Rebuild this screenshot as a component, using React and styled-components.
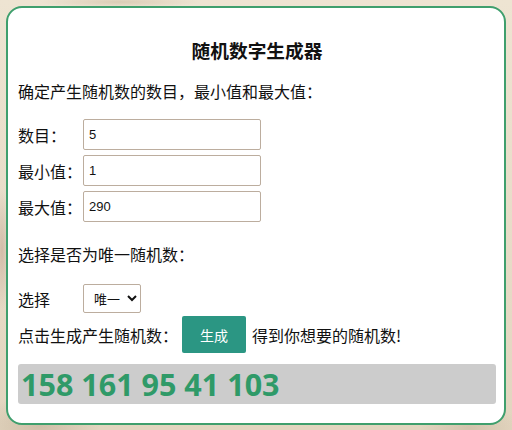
import React, { useState } from 'react';
import styled, { createGlobalStyle } from 'styled-components';

const GlobalStyle = createGlobalStyle`
  html, body {
    margin: 0;
    padding: 0;
  }
  body {
    width: 512px;
    height: 430px;
    overflow: hidden;
    font-family: "Noto Sans CJK SC", "Noto Sans", sans-serif;
    color: #111;
    background-color: #e8ddc9;
    background-image:
      radial-gradient(ellipse 60px 30px at 40px 425px, rgba(150, 120, 95, 0.25), transparent),
      radial-gradient(ellipse 50px 25px at 470px 428px, rgba(150, 120, 95, 0.2), transparent),
      radial-gradient(ellipse 8px 60px at 2px 250px, rgba(170, 130, 110, 0.35), transparent),
      radial-gradient(ellipse 80px 6px at 120px 2px, rgba(190, 170, 140, 0.4), transparent),
      linear-gradient(180deg, #eee4d2, #e2d5bf);
  }
`;

const Card = styled.div`
  box-sizing: border-box;
  margin: 6px;
  width: 500px;
  height: 419px;
  padding: 0 8px 0 10px;
  background: #fff;
  border: 2px solid #3f9f6d;
  border-radius: 16px;
`;

const Title = styled.h3`
  margin: 30px 0 0;
  text-align: center;
  font-size: 18.72px;
  font-weight: 700;
  line-height: 24px;
`;

const Text = styled.p`
  margin: ${({ $top }) => $top}px 0 0;
  font-size: 16px;
  line-height: 22px;
`;

const Fields = styled.div`
  display: flex;
  flex-direction: column;
  gap: 5px;
  margin-top: 17px;
`;

const Row = styled.div`
  display: flex;
  align-items: center;
  margin-top: ${({ $top }) => $top || 0}px;
  font-size: 16px;
  line-height: 22px;
`;

const Label = styled.span`
  width: 65px;
  flex: none;
`;

const Prompt = styled.span`
  margin-right: 4px;
`;

const Input = styled.input`
  box-sizing: border-box;
  width: 178px;
  height: 31px;
  padding: 0 5px;
  border: 1px solid #bcad9e;
  border-radius: 2px;
  font-family: "Liberation Sans", Arial, sans-serif;
  font-size: 13px;
  color: #111;
  outline: none;
`;

const Select = styled.select`
  box-sizing: border-box;
  width: 58px;
  height: 29px;
  padding: 0 0 0 6px;
  border: 1px solid #bcad9e;
  border-radius: 2px;
  background: #fff;
  font-family: "Noto Sans CJK SC", sans-serif;
  font-size: 13px;
  color: #111;
`;

const Button = styled.button`
  width: 64px;
  height: 37px;
  margin: 0 6px 0 0;
  border: none;
  border-radius: 2px;
  background: #2b9683;
  color: #fff;
  font-family: "Noto Sans CJK SC", sans-serif;
  font-size: 14px;
  cursor: pointer;
`;

const Result = styled.div`
  box-sizing: border-box;
  height: 40px;
  margin-top: 11px;
  padding: 0 3px;
  background: #cccccc;
  border-radius: 3px;
  color: #2f9a68;
  font-family: "Noto Sans", sans-serif;
  font-size: 30.5px;
  font-weight: 700;
  line-height: 40px;
  white-space: nowrap;
`;

export default function App() {
  const [count, setCount] = useState('5');
  const [min, setMin] = useState('1');
  const [max, setMax] = useState('290');
  const [unique, setUnique] = useState('unique');
  const [nums, setNums] = useState([158, 161, 95, 41, 103]);

  const generate = () => {
    const n = parseInt(count, 10) || 0;
    const lo = parseInt(min, 10) || 0;
    const hi = parseInt(max, 10) || 0;
    const out = [];
    let guard = 0;
    while (out.length < n && guard < 10000) {
      guard++;
      const v = lo + Math.floor(Math.random() * (hi - lo + 1));
      if (unique === 'unique' && out.includes(v)) continue;
      out.push(v);
    }
    setNums(out);
  };

  return (
    <>
      <GlobalStyle />
      <Card>
        <Title>随机数字生成器</Title>
        <Text $top={18}>确定产生随机数的数目，最小值和最大值：</Text>
        <Fields>
          <Row>
            <Label>数目：</Label>
            <Input value={count} onChange={(e) => setCount(e.target.value)} />
          </Row>
          <Row>
            <Label>最小值：</Label>
            <Input value={min} onChange={(e) => setMin(e.target.value)} />
          </Row>
          <Row>
            <Label>最大值：</Label>
            <Input value={max} onChange={(e) => setMax(e.target.value)} />
          </Row>
        </Fields>
        <Text $top={21}>选择是否为唯一随机数：</Text>
        <Row $top={19}>
          <Label>选择</Label>
          <Select value={unique} onChange={(e) => setUnique(e.target.value)}>
            <option value="unique">唯一</option>
            <option value="repeat">可重复</option>
          </Select>
        </Row>
        <Row $top={3}>
          <Prompt>点击生成产生随机数：</Prompt>
          <Button onClick={generate}>生成</Button>
          <span>得到你想要的随机数!</span>
        </Row>
        <Result>{nums.join(' ')}</Result>
      </Card>
    </>
  );
}
